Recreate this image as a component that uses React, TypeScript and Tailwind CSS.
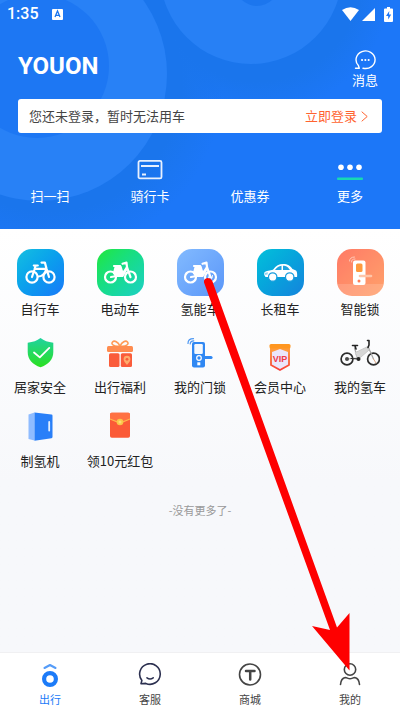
import type { ReactNode } from 'react'

const tiles = [
    { label: '自行车', bg: 'from-[#17bfe0] to-[#1a78f8]', icon: <BicycleIcon /> },
    { label: '电动车', bg: 'from-[#22e72e] to-[#1fcfc4]', icon: <EbikeIcon /> },
    { label: '氢能车', bg: 'from-[#82baff] to-[#5b96f8]', icon: <EbikeIcon hydrogen /> },
    { label: '长租车', bg: 'from-[#04c0da] to-[#1583dc]', icon: <CarIcon /> },
    { label: '智能锁', bg: 'from-[#ff7a66] to-[#ffa16b]', icon: <SmartLockIcon /> },
]

const services = [
    { label: '居家安全', icon: <ShieldIcon /> },
    { label: '出行福利', icon: <GiftIcon /> },
    { label: '我的门锁', icon: <DoorLockIcon /> },
    { label: '会员中心', icon: <VipIcon /> },
    { label: '我的氢车', icon: <HydrogenBikeIcon /> },
    { label: '制氢机', icon: <MachineIcon /> },
    { label: '领10元红包', icon: <RedPacketIcon /> },
]

function BicycleIcon() {
    return (
        <svg viewBox="0 0 47 47" className="size-full" fill="none" stroke="#fff" strokeWidth="2.2" strokeLinecap="round" strokeLinejoin="round">
            <circle cx="15" cy="28" r="5.6" />
            <circle cx="32" cy="28" r="5.6" />
            <path d="M16.8 16.5h4M18.5 17l-1.2 4L15 28M18.3 19.8h11M24.5 13.6h3.4l1.6 6L32 28M29 21c-1.5 4.5-4 6.5-8 6.5" />
        </svg>
    )
}

function EbikeIcon({ hydrogen = false }: { hydrogen?: boolean }) {
    return (
        <svg viewBox="0 0 47 47" className="size-full" fill="none" stroke="#fff" strokeWidth="2.2" strokeLinecap="round" strokeLinejoin="round">
            <circle cx="13.5" cy="28" r="5.5" />
            <circle cx="33.5" cy="28" r="5.5" />
            <path d="M17 17h6M25.5 14.8l4-1.2.5 4.5 3.5 10M30 18l-5 8-11 2" />
            <path d="M18.5 18.5l5-1 2 6.5 3.5-3-3.5 6h-6l-2.5-3z" fill="#fff" />
            {hydrogen && <path d="M32.3 26.5l-1 3.5M35.5 26.5l-1 3.5M32 28.3h3" strokeWidth="1" />}
        </svg>
    )
}

function CarIcon() {
    return (
        <svg viewBox="0 0 47 47" className="size-full">
            <path d="M7 25.5c0-2.5 1-3 3-3.5l6-1.3c3-4 6-5.7 10-5.7 5 0 7 1.5 9.5 5l3.5 1.5c1 .7 1.5 4.5 1 6.5H8.5z" fill="#fff" />
            <path d="M18 21c2-2.7 3.8-3.9 6.5-4.2V21zM26 16.7c3.5 0 4.8 1 7 4.3h-7z" fill="#20a4df" />
            <path d="M7.6 24l3.4-.7-.5 2.2-3 .5z" fill="#8ed3ef" />
            <circle cx="15.7" cy="28" r="4.2" fill="#fff" stroke="#189dde" strokeWidth="1.2" />
            <circle cx="32.7" cy="28" r="4.2" fill="#fff" stroke="#189dde" strokeWidth="1.2" />
        </svg>
    )
}

function SmartLockIcon() {
    return (
        <svg viewBox="0 0 47 47" className="size-full">
            <path d="M0 35h47v12H0z" fill="#fff" opacity=".15" />
            <rect x="16" y="11.5" width="12.5" height="24.5" rx="2" fill="#fff" />
            <rect x="19" y="14.5" width="6.5" height="8.5" rx="1.5" fill="#ff9a3e" />
            <path d="M23 27h11" stroke="#ffc5a8" strokeWidth="2.6" strokeLinecap="round" />
            <circle cx="22" cy="32" r="1.5" fill="#ff7c55" />
            <path d="M12.5 12c0-2.5 2-4 5-4M14.5 13c0-2 1-3 3.5-3" fill="none" stroke="#ffc9b8" strokeLinecap="round" />
        </svg>
    )
}

function ShieldIcon() {
    return (
        <svg viewBox="0 0 30 30" className="size-full">
            <defs>
                <linearGradient id="shield" x1="0" y1="0" x2="0" y2="1">
                    <stop offset="0" stopColor="#1fd3a0" />
                    <stop offset="1" stopColor="#2be01f" />
                </linearGradient>
            </defs>
            <path d="M15.5 0C19 2.6 23 4.2 28.3 4.7V14c0 7.5-5 12.5-12.8 15.3C7.7 26.5 2.7 21.5 2.7 14V4.7C8 4.2 12 2.6 15.5 0z" fill="url(#shield)" />
            <path d="M9 14.5l5.8 4.9 9.5-9.5" fill="none" stroke="#fff" strokeWidth="1.8" strokeLinecap="round" strokeLinejoin="round" />
        </svg>
    )
}

function GiftIcon() {
    return (
        <svg viewBox="0 0 30 30" className="size-full">
            <path d="M15 8C9 9 5.5 6 7.5 4S13 4 15 8c2-4 5.5-6 7.5-4S21 9 15 8z" fill="none" stroke="#ff9a56" strokeWidth="1.6" />
            <rect x="2" y="8" width="26" height="6" rx="1.5" fill="#ff8c50" />
            <rect x="4" y="15.2" width="10.5" height="13.8" rx="1.5" fill="#fa5c3b" />
            <rect x="15.8" y="15.2" width="11.2" height="13.8" rx="1.5" fill="#fa5c3b" />
            <path d="M22 27c-2-2.5-3.4-4-3.4-5.8a3.4 3.4 0 0 1 6.8 0C25.4 23 24 24.5 22 27z" fill="#ffab6b" />
            <circle cx="22" cy="21.3" r="1.4" fill="#fa5c3b" />
        </svg>
    )
}

function DoorLockIcon() {
    return (
        <svg viewBox="0 0 30 30" className="size-full">
            <rect x="7" y="4" width="13" height="25.5" rx="2" fill="#3088f3" />
            <rect x="9.3" y="6" width="8.5" height="10" rx="1.2" fill="#f4f8fd" />
            <path d="M14 19.5h12" stroke="#3088f3" strokeWidth="3.2" strokeLinecap="round" />
            <circle cx="14" cy="20" r="2.3" fill="#3088f3" stroke="#fff" strokeWidth="1.2" />
            <rect x="12.3" y="24.3" width="3" height="3" fill="#fff" />
            <path d="M3 5.5C3 2.5 5 .7 8.5.7M5.2 6C5.2 4 6.5 3 8.8 2.9" fill="none" stroke="#4d97f2" strokeWidth="1.2" strokeLinecap="round" />
        </svg>
    )
}

function VipIcon() {
    return (
        <svg viewBox="0 0 30 34" className="h-[34px] w-[30px] shrink-0">
            <defs>
                <linearGradient id="vip" x1="0" y1="0" x2="0" y2="1">
                    <stop offset="0" stopColor="#ff9a26" />
                    <stop offset="1" stopColor="#f8413c" />
                </linearGradient>
            </defs>
            <path d="M6 9h18v18l-9 5-9-5z" fill="#ebe6fb" stroke="url(#vip)" strokeWidth="1.8" strokeLinejoin="round" />
            <path d="M7 10h16v4l-8-3-8 3z" fill="#ff9a3a" />
            <rect x="4.5" y="6" width="21" height="4.5" rx="1.5" fill="#ff9620" />
            <text x="15" y="24" textAnchor="middle" fontSize="9" fontWeight="700" fill="#f03c4a" fontFamily="Liberation Sans, sans-serif">VIP</text>
        </svg>
    )
}

function HydrogenBikeIcon() {
    return (
        <svg viewBox="0 0 40 30" className="h-[30px] w-[40px] shrink-0" fill="none" strokeLinecap="round" strokeLinejoin="round">
            <circle cx="7" cy="21" r="5.9" stroke="#2c2c2c" strokeWidth="1.7" />
            <circle cx="33.5" cy="21" r="5.9" stroke="#2c2c2c" strokeWidth="1.7" />
            <path d="M14.5 10l3 10-10 1M28.5 9.5l5 11.5" stroke="#a5a5a5" strokeWidth="1.2" />
            <path d="M15.5 14.5L28 8.5l1 3.5-8 7-3 2z" fill="#d6d6d6" stroke="#c8c8c8" />
            <path d="M12.5 7.5h5M15 8l1 3M27.5 2.5h1.5v4.5l-1 2.5" stroke="#242424" strokeWidth="1.6" />
            <circle cx="18.5" cy="21" r="2" fill="#242424" />
            <path d="M11 20.5l7.5.5" stroke="#242424" />
            <circle cx="7" cy="21" r="2" fill="#4a4a4a" />
            <path d="M33.5 21l2.5 4" stroke="#dca783" />
        </svg>
    )
}

function MachineIcon() {
    return (
        <svg viewBox="0 0 30 30" className="size-full">
            <path d="M3.5 2.5L9.5.5v28l-6-1.5z" fill="#8fbcff" />
            <path d="M9.5.5l17 2c.7.1 1 .5 1 1.2V25c0 .6-.3 1-1 1.2l-17 2.5z" fill="#297ff8" />
            <rect x="23.3" y="9" width="1.8" height="10.5" rx=".9" fill="#e4efff" />
        </svg>
    )
}

function RedPacketIcon() {
    return (
        <svg viewBox="0 0 30 30" className="size-full">
            <rect x="5" y=".8" width="20" height="25" rx="1.8" fill="#fb5a37" />
            <path d="M5 2.5C5 1.3 5.8.8 6.8.8h16.4c1 0 1.8.5 1.8 1.7V7l-10 4L5 7z" fill="#ff7143" />
            <path d="M5 7l10 4 10-4" fill="none" stroke="#ffb64c" strokeWidth="1.2" />
            <circle cx="15" cy="10" r="3.3" fill="#f9c648" />
            <circle cx="15" cy="10" r="1.5" fill="#ffdc75" />
        </svg>
    )
}

function StatusBar() {
    return (
        <div className="flex h-7 items-center justify-between px-[7px]">
            <div className="flex items-center gap-[13px]">
                <span className="font-['Roboto',sans-serif] text-base leading-5 font-medium">1:35</span>
                <svg viewBox="0 0 11 11" className="size-[11px]">
                    <rect width="11" height="11" rx="1" fill="#fff" />
                    <path d="M3 8l2.5-6L8 8M4 6.3h3" fill="none" stroke="#1c76ee" strokeWidth="1.3" />
                </svg>
            </div>
            <div className="flex items-center">
                <svg viewBox="0 0 17 14" className="h-[14px] w-[17px]">
                    <path d="M0 3Q8.5-2.500 17 3L8.5 14z" fill="#fff" />
                </svg>
                <svg viewBox="0 0 13 13" className="ml-[3px] size-[13px]">
                    <path d="M13 0v13H0z" fill="#fff" />
                </svg>
                <svg viewBox="0 0 9 15" className="ml-[9px] h-[15px] w-[9px]">
                    <path d="M3 0h3v1.5h2a1 1 0 0 1 1 1V14a1 1 0 0 1-1 1H1a1 1 0 0 1-1-1V2.5a1 1 0 0 1 1-1h2z" fill="#fff" />
                    <path d="M5.3 4L2 9h2.2v3.5L7.2 7.5H5z" fill="#1c76f8" />
                </svg>
            </div>
        </div>
    )
}

function QuickAction({ label, children }: { label: string; children?: ReactNode }) {
    return (
        <button type="button" className="flex flex-col items-center gap-1.5">
            <span className="flex h-5 w-[26px] justify-center">{children}</span>
            <span className="text-[13px] leading-5">{label}</span>
        </button>
    )
}

function Header() {
    return (
        <header className="relative overflow-hidden bg-[#1c77f8] pb-[23px] text-white">
            {/* soft circles behind the header */}
            <svg viewBox="0 0 400 229" className="absolute top-0 left-0 h-[229px] w-[400px]">
                <defs>
                    <radialGradient id="shade">
                        <stop offset=".75" stopColor="#1a75ec" />
                        <stop offset="1" stopColor="#1a75ec" stopOpacity="0" />
                    </radialGradient>
                </defs>
                <circle cx="50" cy="80" r="175" fill="url(#shade)" />
                <circle cx="258" cy="-20" r="135" fill="url(#shade)" />
                <circle cx="40" cy="74" r="127" fill="#2881f6" />
                <circle cx="37" cy="66" r="72" fill="#1d77f3" />
                <circle cx="251" cy="-27" r="91" fill="#2780f5" />
                <circle cx="257" cy="-16" r="22" fill="#1c76ee" />
            </svg>
            <div className="relative">
                <StatusBar />
                <div className="flex items-start justify-between pt-[22px] pr-[22px] pl-[18px]">
                    <h1 className="font-['Roboto',sans-serif] text-2xl leading-8 font-bold">YOUON</h1>
                    <button type="button" className="flex flex-col items-center">
                        <svg viewBox="0 0 22 20" className="h-5 w-[22px]" fill="none" stroke="#fff" strokeWidth="1.4" strokeLinecap="round" strokeLinejoin="round">
                            <path d="M4.4 15.5A9.5 8.8 0 1 1 9 18.2M1.5 18.3h3.8l-.9-2.8" />
                            <path d="M8 10h.1M11.3 10h.1M14.6 10h.1" strokeWidth="2" />
                        </svg>
                        <span className="text-[13px] leading-5">消息</span>
                    </button>
                </div>
                <div className="mx-[18px] mt-[9px] flex h-[34px] items-center justify-between rounded-[3px] bg-white pr-[14px] pl-[11px] text-[13px] leading-5">
                    <span className="text-[#444]">您还未登录，暂时无法用车</span>
                    <a href="#login" className="flex items-center gap-1 text-[#ff6330]">
                        立即登录
                        <svg viewBox="0 0 7 11" className="h-[11px] w-[7px]" fill="none" stroke="currentColor">
                            <path d="M.7.7l5.5 4.8L.7 10.3" />
                        </svg>
                    </a>
                </div>
                <div className="mt-[27px] grid grid-cols-4">
                    <QuickAction label="扫一扫" />
                    <QuickAction label="骑行卡">
                        <svg viewBox="0 0 26 20" className="h-5 w-[26px]" fill="none" stroke="#e8f1fe" strokeWidth="1.8">
                            <rect x="1.5" y=".9" width="23" height="17.5" rx="1.5" />
                            <path d="M4 6h18M5 14.5h4" />
                        </svg>
                    </QuickAction>
                    <QuickAction label="优惠券" />
                    <QuickAction label="更多">
                        <svg viewBox="0 0 26 20" className="h-5 w-[26px]">
                            <circle cx="4" cy="7.3" r="2.8" fill="#fff" />
                            <circle cx="13" cy="7.3" r="2.8" fill="#fff" />
                            <circle cx="22" cy="7.3" r="2.8" fill="#fff" />
                            <rect y="17.5" width="26" height="2.5" rx="1" fill="#17d9b4" />
                        </svg>
                    </QuickAction>
                </div>
            </div>
        </header>
    )
}

function NavItem({ label, active = false, children }: { label: string; active?: boolean; children: ReactNode }) {
    return (
        <a href="#" className={`flex flex-col items-center gap-1 pt-2.5 pb-[5px] text-[11px] leading-4 ${active ? 'text-[#1c7bf8]' : 'text-[#444]'}`}>
            <svg viewBox="0 0 24 24" className="size-6" fill="none" stroke="currentColor" strokeWidth="1.6" strokeLinecap="round" strokeLinejoin="round">
                {children}
            </svg>
            {label}
        </a>
    )
}

export default function App() {
    return (
        <div className="relative flex min-h-screen flex-col bg-[#f7f8fb] font-['Noto_Sans_CJK_SC',sans-serif] text-[#222]">
            <Header />
            <main className="grow bg-linear-to-b from-white to-[#f7f8fb] to-60%">
                <div className="grid grid-cols-5 pt-5">
                    {tiles.map((tile) => (
                        <button key={tile.label} type="button" className="flex flex-col items-center gap-[3px]">
                            <span className={`size-[47px] overflow-hidden rounded-[15px] bg-linear-to-br ${tile.bg}`}>{tile.icon}</span>
                            <span className="text-[13px] leading-5">{tile.label}</span>
                        </button>
                    ))}
                </div>
                <div className="mt-[19px] grid grid-cols-5 gap-y-[15px]">
                    {services.map((service) => (
                        <button key={service.label} type="button" className="flex flex-col items-center gap-[9px]">
                            <span className="flex size-[30px] justify-center">{service.icon}</span>
                            <span className="text-[13px] leading-5 whitespace-nowrap">{service.label}</span>
                        </button>
                    ))}
                </div>
                <p className="mt-[29px] text-center text-[11px] leading-5 text-[#999]">-没有更多了-</p>
            </main>
            <nav className="grid grid-cols-4 border-t border-[#f0f0f2] bg-white">
                <NavItem label="出行" active>
                    <path d="M6.5 5L12 2l5.5 3" stroke="#559cf8" strokeWidth="2" />
                    <circle cx="12" cy="16" r="5.9" strokeWidth="4.2" />
                </NavItem>
                <NavItem label="客服">
                    <path d="M3.9 17.4A10.3 10.3 0 1 1 7.8 20.4L3 20.8z" stroke="#2c3050" />
                    <path d="M9 14.8q3 2.4 6.2 0" stroke="#2c3050" />
                </NavItem>
                <NavItem label="商城">
                    <circle cx="12" cy="11.5" r="10.5" />
                    <path d="M8 8h8.5M12.2 8v8.5" strokeWidth="2.5" />
                </NavItem>
                <NavItem label="我的">
                    <circle cx="12" cy="6.5" r="5.7" />
                    <path d="M2.5 21.5c.3-3.5 2-6.5 4.8-7 1.7 0 2.7 1.3 4.7 1.3s3-1.3 4.7-1.3c2.8.5 4.5 3.5 4.8 7" />
                </NavItem>
            </nav>
            {/* pointer to the profile tab */}
            <svg viewBox="0 0 150 400" className="pointer-events-none absolute right-[50px] bottom-[36px] h-[400px] w-[150px]">
                <path d="M4 6.5Q3.5 2.5 7.5 2 11 2 12.5 5.5L137 351.5 149.5 337V394.5L112 350 130 354z" fill="#fe0000" />
            </svg>
        </div>
    )
}
